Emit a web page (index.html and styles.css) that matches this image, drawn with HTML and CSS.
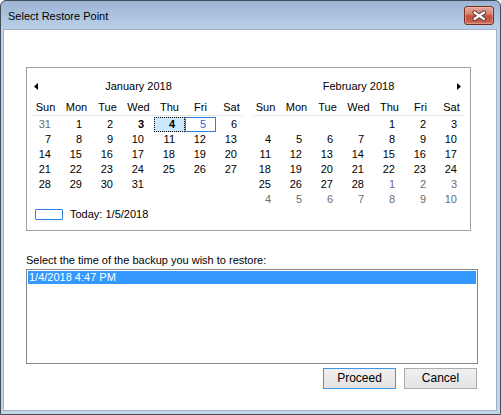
FILE: index.html
```html
<!DOCTYPE html>
<html>
<head>
<meta charset="utf-8">
<title>Select Restore Point</title>
<link rel="stylesheet" href="styles.css">
</head>
<body>
<div class="window">
  <div class="titlebar">
    <span class="title">Select Restore Point</span>
    <div class="close-btn">
      <svg width="30" height="19" viewBox="0 0 30 19">
        <path d="M10.5 6.5 L20 13 M20 6.5 L10.5 13" stroke="#5a3a36" stroke-width="4.2" stroke-linecap="round" fill="none"/>
        <path d="M10.5 6.5 L20 13 M20 6.5 L10.5 13" stroke="#ffffff" stroke-width="2.2" stroke-linecap="round" fill="none"/>
      </svg>
    </div>
  </div>
  <div class="client">
    <div class="calendar">
      <div class="months">
        <div class="month">
          <div class="month-title">
            <span class="nav nav-left"><svg width="4" height="7" viewBox="0 0 4 7"><polygon points="4,0 4,7 0,3.5" fill="#000"/></svg></span>
            <span class="month-name">January 2018</span>
            <span class="nav"></span>
          </div>
          <div class="dow">
            <span>Sun</span><span>Mon</span><span>Tue</span><span>Wed</span><span>Thu</span><span>Fri</span><span>Sat</span>
          </div>
          <div class="rule"></div>
          <div class="days">
            <span class="other">31</span><span>1</span><span>2</span><span class="bold">3</span><span class="bold selected">4</span><span class="today">5</span><span>6</span>
            <span>7</span><span>8</span><span>9</span><span>10</span><span>11</span><span>12</span><span>13</span>
            <span>14</span><span>15</span><span>16</span><span>17</span><span>18</span><span>19</span><span>20</span>
            <span>21</span><span>22</span><span>23</span><span>24</span><span>25</span><span>26</span><span>27</span>
            <span>28</span><span>29</span><span>30</span><span>31</span><span></span><span></span><span></span>
            <span></span><span></span><span></span><span></span><span></span><span></span><span></span>
          </div>
        </div>
        <div class="month">
          <div class="month-title">
            <span class="nav"></span>
            <span class="month-name">February 2018</span>
            <span class="nav nav-right"><svg width="4" height="7" viewBox="0 0 4 7"><polygon points="0,0 0,7 4,3.5" fill="#000"/></svg></span>
          </div>
          <div class="dow">
            <span>Sun</span><span>Mon</span><span>Tue</span><span>Wed</span><span>Thu</span><span>Fri</span><span>Sat</span>
          </div>
          <div class="rule"></div>
          <div class="days">
            <span></span><span></span><span></span><span></span><span>1</span><span>2</span><span>3</span>
            <span>4</span><span>5</span><span>6</span><span>7</span><span>8</span><span>9</span><span>10</span>
            <span>11</span><span>12</span><span>13</span><span>14</span><span>15</span><span>16</span><span>17</span>
            <span>18</span><span>19</span><span>20</span><span>21</span><span>22</span><span>23</span><span>24</span>
            <span>25</span><span>26</span><span>27</span><span>28</span><span class="other">1</span><span class="other">2</span><span class="other">3</span>
            <span class="other">4</span><span class="other">5</span><span class="other">6</span><span class="other">7</span><span class="other">8</span><span class="other">9</span><span class="other">10</span>
          </div>
        </div>
      </div>
      <div class="today-row">
        <span class="today-box"></span>
        <span class="today-text">Today: 1/5/2018</span>
      </div>
    </div>
    <div class="label">Select the time of the backup you wish to restore:</div>
    <div class="listbox">
      <div class="item selected-item">1/4/2018 4:47 PM</div>
    </div>
    <div class="buttons">
      <div class="btn btn-default">Proceed</div>
      <div class="btn">Cancel</div>
    </div>
  </div>
</div>
</body>
</html>
```
FILE: styles.css
```css
html, body {
  margin: 0;
  padding: 0;
}
body {
  width: 501px;
  height: 415px;
  font-family: "Liberation Sans", Arial, sans-serif;
  font-size: 11px;
  color: #000;
  background: #fff;
}
.window {
  box-sizing: border-box;
  width: 501px;
  height: 415px;
  border: 1px solid #3f4d5c;
  border-radius: 6px 6px 0 0;
  background: linear-gradient(to bottom, #9cb5d4 0px, #bad0e9 28px, #c2d3e7 29px, #c6d5e6 100%);
  display: flex;
  flex-direction: column;
}
.titlebar {
  height: 28px;
  display: flex;
  align-items: flex-start;
  padding-left: 7px;
}
.title {
  margin-top: 9px;
  line-height: 13px;
  color: #000;
}
.close-btn {
  margin-left: auto;
  margin-right: 6px;
  margin-top: 5px;
  box-sizing: border-box;
  width: 30px;
  height: 19px;
  border: 1px solid #7a2b22;
  border-radius: 3px;
  background: linear-gradient(to bottom, #e6a699 0%, #d98474 40%, #c4503f 52%, #c75a48 80%, #d27562 100%);
  box-shadow: inset 0 0 0 1px rgba(255, 220, 210, 0.35);
  position: relative;
}
.close-btn svg {
  position: absolute;
  left: -1px;
  top: -1px;
}
.client {
  flex: 1;
  margin: 0 3px 3px 2px;
  border: 1px solid #a2b2c6;
  background: #fff;
  padding: 37px 0 0 22px;
}
.calendar {
  box-sizing: border-box;
  width: 445px;
  height: 164px;
  border: 1px solid #a0a0a0;
  padding: 8px 3px 0 3px;
}
.months {
  display: flex;
  gap: 3px;
}
.month {
  width: 217px;
}
.month-title {
  display: grid;
  grid-template-columns: 24px 1fr 24px;
  height: 20px;
  align-items: center;
}
.month-name {
  text-align: center;
  line-height: 20px;
}
.nav {
  display: flex;
  align-items: center;
  height: 20px;
}
.nav-left {
  padding-left: 4px;
}
.nav-right {
  justify-content: flex-end;
  padding-right: 6px;
}
.nav svg {
  display: block;
}
.dow {
  margin-top: 4px;
  display: grid;
  grid-template-columns: repeat(7, 31px);
  height: 15px;
  line-height: 15px;
}
.dow span {
  text-align: center;
}
.rule {
  height: 1px;
  margin: 0 4px 1px 3px;
  background: #e6e6e6;
}
.days {
  display: grid;
  grid-template-columns: repeat(7, 31px);
  grid-auto-rows: 15px;
}
.days span {
  box-sizing: border-box;
  text-align: right;
  padding-right: 9px;
  line-height: 13px;
  border: 1px solid transparent;
}
.days .other {
  color: #6d6d6d;
}
.days .bold {
  font-weight: bold;
}
.days .selected {
  background: #cce8ff;
  border: 1px dotted #000;
}
.days .today {
  border: 1px solid #2f80e0;
  color: #2a66c4;
}
.today-row {
  margin-top: 1px;
  height: 13px;
  display: flex;
  align-items: center;
  padding-left: 5px;
}
.today-box {
  box-sizing: border-box;
  width: 28px;
  height: 11px;
  border: 1px solid #2f80e0;
  border-radius: 1px;
}
.today-text {
  margin-left: 7px;
  line-height: 13px;
}
.label {
  margin-top: 23px;
  line-height: 13px;
  height: 13px;
}
.listbox {
  box-sizing: border-box;
  margin-top: 2px;
  width: 452px;
  height: 95px;
  border: 1px solid #828790;
  padding: 1px;
}
.item {
  height: 13px;
  line-height: 13px;
  padding-left: 1px;
}
.selected-item {
  background: #3399ff;
  color: #fff;
}
.buttons {
  margin-top: 4px;
  width: 451px;
  display: flex;
  justify-content: flex-end;
  gap: 8px;
}
.btn {
  box-sizing: border-box;
  width: 73px;
  height: 21px;
  border: 1px solid #adadad;
  background: linear-gradient(to bottom, #f0f0f0, #e3e3e3);
  text-align: center;
  line-height: 19px;
  font-size: 12px;
}
.btn-default {
  border-color: #3c97ea;
}
```
